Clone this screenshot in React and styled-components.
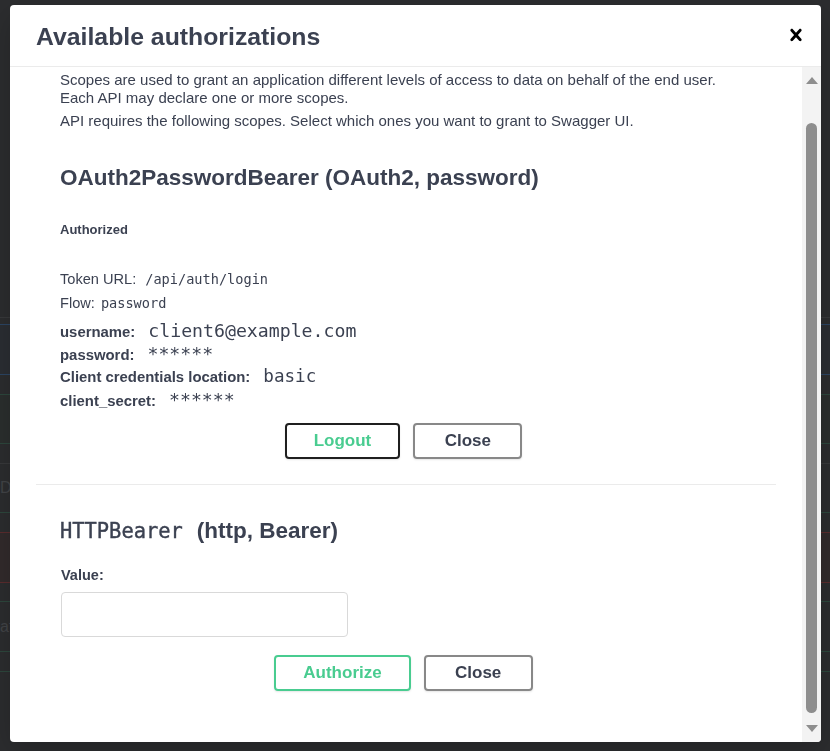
import React from 'react';
import styled, { createGlobalStyle } from 'styled-components';

const GlobalStyle = createGlobalStyle`
  html, body { margin: 0; padding: 0; }
  body {
    background: #2c2d2f;
    font-family: "Liberation Sans", Arial, sans-serif;
    color: #3b4151;
    overflow: hidden;
  }
`;

/* ---------- dimmed page behind the modal ---------- */
const BackPage = styled.div`
  display: flex;
  flex-direction: column;
  height: 751px;
  overflow: hidden;
  background: #2c2d2f;
`;

const BackRow = styled.div`
  flex: none;
  box-sizing: border-box;
  height: ${(p) => p.$h}px;
  border-bottom: 1px solid ${(p) => p.$line || 'transparent'};
  background: ${(p) => p.$bg || 'transparent'};
  display: flex;
  align-items: center;
  font-size: 16px;
  color: #424447;
`;

const BackLabel = styled.span`
  margin-left: 0;
`;

const backRows = [
  { h: 318, line: '#38393b' },
  { h: 7, line: '#2c4563' },
  { h: 50, line: '#2c4563', bg: '#2b2e33' },
  { h: 20, line: '#2d473d' },
  { h: 49, line: '#2d473d', bg: '#2b2f2e' },
  { h: 20, line: '#38393b' },
  { h: 49, line: '#2d473d', text: 'Da' },
  { h: 20, line: '#5b2c2e' },
  { h: 50, line: '#5b2c2e', bg: '#322b2c' },
  { h: 19, line: '#2d473d' },
  { h: 50, line: '#2d473d', text: 'at' },
  { h: 20, line: '#2d473d' },
];

/* ---------- modal ---------- */
const Overlay = styled.div`
  position: fixed;
  inset: 0;
  display: flex;
  box-sizing: border-box;
  padding: 5px 9px 9px 10px;
`;

const Modal = styled.div`
  flex: 1;
  display: flex;
  flex-direction: column;
  background: #fff;
  border-radius: 4px;
  overflow: hidden;
  box-shadow: 0 10px 30px rgba(0, 0, 0, 0.2);
`;

const Header = styled.div`
  flex: none;
  height: 61px;
  display: flex;
  align-items: center;
  justify-content: space-between;
  padding: 0 13px 0 26px;
  border-bottom: 1px solid #ebebeb;
`;

const Title = styled.h3`
  margin: 2px 0 0;
  font-size: 24.8px;
  line-height: 28px;
  font-weight: 700;
  color: #3b4151;
`;

const CloseX = styled.button`
  width: 24px;
  height: 24px;
  padding: 0;
  border: none;
  background: none;
  display: flex;
  margin-top: -2px;
  svg { display: block; }
`;

const Body = styled.div`
  flex: 1;
  min-height: 0;
  display: flex;
`;

const Content = styled.div`
  flex: 1;
  overflow: hidden;
  padding: 4px 26px 0 26px;
`;

const ScrollTrack = styled.div`
  flex: none;
  width: 19px;
  background: #f3f3f3;
  display: flex;
  flex-direction: column;
  align-items: center;
`;

const Arrow = styled.div`
  width: 0;
  height: 0;
  border-left: 6px solid transparent;
  border-right: 6px solid transparent;
  ${(p) =>
    p.$down
      ? 'border-top: 7px solid #8e8e8e; margin-top: auto; margin-bottom: 10px;'
      : 'border-bottom: 7px solid #8e8e8e; margin-top: 10px;'}
`;

const Thumb = styled.div`
  width: 11px;
  height: 590px;
  margin-top: 39px;
  border-radius: 6px;
  background: #8e8e8e;
`;

/* ---------- auth blocks ---------- */
const AuthBlock = styled.div`
  padding-bottom: ${(p) => (p.$divider ? 25 : 0)}px;
  border-bottom: ${(p) => (p.$divider ? '1px solid #ebebeb' : 'none')};
`;

const Inner = styled.div`
  padding-left: 24px;
`;

const Para = styled.p`
  margin: ${(p) => p.$mt || 0}px 0 0;
  font-size: 15px;
  line-height: 18px;
  color: #3b4151;
`;

const Heading = styled.h4`
  margin: ${(p) => p.$mt}px 0 0;
  font-size: 22.5px;
  line-height: 28px;
  font-weight: 700;
  color: #3b4151;
  display: flex;
  align-items: baseline;
`;

const HeadCode = styled.code`
  font-family: "DejaVu Sans Mono", monospace;
  font-size: 20.4px;
  font-weight: 400;
  -webkit-text-stroke: 0.4px #3b4151;
  margin-right: 14px;
`;

const Status = styled.h6`
  margin: 30px 0 0;
  font-size: 13px;
  line-height: 16px;
  font-weight: 700;
  color: #3b4151;
`;

const InfoLine = styled.p`
  margin: ${(p) => p.$mt}px 0 0;
  font-size: 14.6px;
  line-height: 18px;
  color: #3b4151;
  display: flex;
  align-items: baseline;
`;

const SmallCode = styled.code`
  font-family: "DejaVu Sans Mono", monospace;
  font-size: 13.6px;
  margin-left: ${(p) => p.$gap}px;
`;

const CredRow = styled.div`
  margin-top: ${(p) => p.$mt || 0}px;
  height: 23px;
  display: flex;
  align-items: baseline;
  gap: 13px;
  line-height: 23px;
`;

const CredLabel = styled.label`
  font-size: 14.9px;
  font-weight: 700;
  color: #3b4151;
`;

const CredValue = styled.code`
  font-family: "DejaVu Sans Mono", monospace;
  font-size: ${(p) => p.$size || 18.2}px;
  color: #3b4151;
`;

const ValueLabel = styled.label`
  display: block;
  margin: 21px 0 0 1px;
  font-size: 14.5px;
  line-height: 18px;
  font-weight: 700;
  color: #3b4151;
`;

const TextInput = styled.input`
  display: block;
  box-sizing: border-box;
  width: 287px;
  height: 45px;
  margin: 8px 0 0 1px;
  padding: 8px 10px;
  border: 1px solid #d9d9d9;
  border-radius: 4px;
  font-size: 14px;
  outline: none;
`;

const ButtonRow = styled.div`
  margin-top: ${(p) => p.$mt}px;
  display: flex;
  justify-content: center;
  gap: 13px;
  padding-right: 5px;
`;

const Btn = styled.button`
  height: 36px;
  min-width: 109px;
  box-sizing: border-box;
  padding: 0 27px;
  border: 2px solid ${(p) => p.$border};
  border-radius: 4px;
  background: transparent;
  color: ${(p) => p.$color};
  font-family: "Liberation Sans", Arial, sans-serif;
  font-size: 17px;
  font-weight: 700;
  box-shadow: 0 1px 2px rgba(0, 0, 0, 0.1);
  cursor: pointer;
`;

const CloseIcon = () => (
  <svg width="24" height="24" viewBox="0 0 20 20" aria-hidden="true">
    <path
      fill="#000"
      d="M14.348 14.849c-.469.469-1.229.469-1.697 0L10 11.819l-2.651 3.029c-.469.469-1.229.469-1.697 0-.469-.469-.469-1.229 0-1.697l2.758-3.15-2.759-3.152c-.469-.469-.469-1.228 0-1.697.469-.469 1.228-.469 1.697 0L10 8.183l2.651-3.031c.469-.469 1.228-.469 1.697 0 .469.469.469 1.229 0 1.697l-2.758 3.152 2.758 3.150c.469.469.469 1.229 0 1.698z"
    />
  </svg>
);

export default function App() {
  return (
    <>
      <GlobalStyle />
      <BackPage>
        {backRows.map((r, i) => (
          <BackRow key={i} $h={r.h} $line={r.line} $bg={r.bg}>
            {r.text && <BackLabel>{r.text}</BackLabel>}
          </BackRow>
        ))}
      </BackPage>
      <Overlay>
        <Modal>
          <Header>
            <Title>Available authorizations</Title>
            <CloseX aria-label="Close">
              <CloseIcon />
            </CloseX>
          </Header>
          <Body>
            <Content>
              <AuthBlock $divider>
                <Inner>
                  <Para>
                    Scopes are used to grant an application different levels of access to data on behalf of the end user.
                    <br />
                    Each API may declare one or more scopes.
                  </Para>
                  <Para $mt={5}>API requires the following scopes. Select which ones you want to grant to Swagger UI.</Para>
                  <Heading $mt={34}>OAuth2PasswordBearer (OAuth2, password)</Heading>
                  <Status>Authorized</Status>
                  <InfoLine $mt={32}>
                    Token URL:<SmallCode $gap={9}>/api/auth/login</SmallCode>
                  </InfoLine>
                  <InfoLine $mt={6}>
                    Flow:<SmallCode $gap={6}>password</SmallCode>
                  </InfoLine>
                  <CredRow $mt={7}>
                    <CredLabel>username:</CredLabel>
                    <CredValue>client6@example.com</CredValue>
                  </CredRow>
                  <CredRow>
                    <CredLabel>password:</CredLabel>
                    <CredValue>******</CredValue>
                  </CredRow>
                  <CredRow>
                    <CredLabel>Client credentials location:</CredLabel>
                    <CredValue $size={17.6}>basic</CredValue>
                  </CredRow>
                  <CredRow>
                    <CredLabel>client_secret:</CredLabel>
                    <CredValue>******</CredValue>
                  </CredRow>
                </Inner>
                <ButtonRow $mt={12}>
                  <Btn $border="#1f1f1f" $color="#49cc90">Logout</Btn>
                  <Btn $border="#888888" $color="#3b4151">Close</Btn>
                </ButtonRow>
              </AuthBlock>
              <AuthBlock>
                <Inner>
                  <Heading $mt={32}>
                    <HeadCode>HTTPBearer</HeadCode>(http, Bearer)
                  </Heading>
                  <ValueLabel>Value:</ValueLabel>
                  <TextInput type="text" />
                </Inner>
                <ButtonRow $mt={18}>
                  <Btn $border="#49cc90" $color="#49cc90">Authorize</Btn>
                  <Btn $border="#888888" $color="#3b4151">Close</Btn>
                </ButtonRow>
              </AuthBlock>
            </Content>
            <ScrollTrack>
              <Arrow />
              <Thumb />
              <Arrow $down />
            </ScrollTrack>
          </Body>
        </Modal>
      </Overlay>
    </>
  );
}
